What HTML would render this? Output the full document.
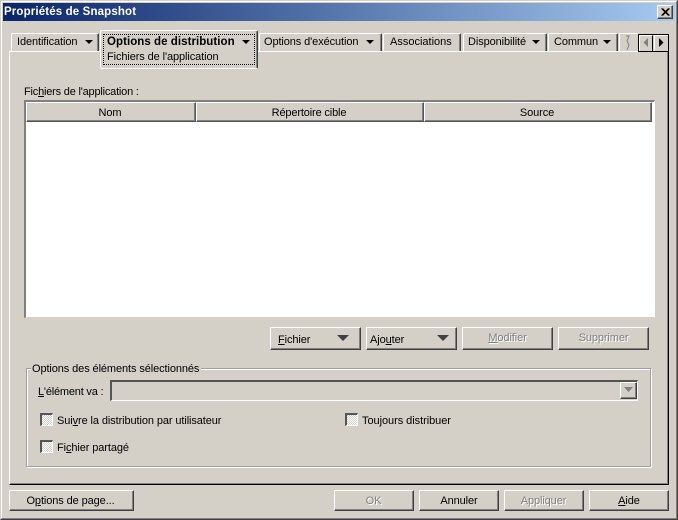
<!DOCTYPE html>
<html><head><meta charset="utf-8"><style>
html,body{margin:0;padding:0}
body{width:678px;height:520px;overflow:hidden;position:relative;font:11px/13px "Liberation Sans",sans-serif;letter-spacing:-.1px;color:#000;
background:#d4d0c8}
div,span.a{position:absolute;box-sizing:border-box}
.t{white-space:nowrap}
.btn{background:#d4d0c8;border-top:1px solid #fff;border-left:1px solid #fff;border-right:1px solid #404040;border-bottom:1px solid #404040;box-shadow:inset -1px -1px 0 #808080;text-align:center;white-space:nowrap}
.dis{color:#808080;text-shadow:1px 1px 0 #fff}
.tab{background:#d4d0c8;border-top:1px solid #fff;border-left:1px solid #fff;border-right:1px solid #404040;box-shadow:inset -1px 0 0 #808080;height:18px;border-radius:2px 2px 0 0;white-space:nowrap}
.arr{width:0;height:0;border-left:4px solid transparent;border-right:4px solid transparent;border-top:4px solid #000}
.arrb{width:0;height:0;border-left:6px solid transparent;border-right:6px solid transparent;border-top:6px solid #404040}
.cb{width:13px;height:13px;border-top:2px solid #555;border-left:2px solid #555;border-right:1px solid #fff;border-bottom:1px solid #fff;background:repeating-conic-gradient(#fff 0 25%,#d4d0c8 0 50%) 0 0/2px 2px}
.hd{top:102px;height:20px;background:#d4d0c8;border-top:1px solid #fff;border-left:1px solid #fff;border-right:1px solid #555;border-bottom:1px solid #555;box-shadow:inset -1px -1px 0 #808080;text-align:center;line-height:20px;padding-right:2px}
</style></head><body>
<!-- window frame -->
<div style="left:0;top:0;width:678px;height:520px;border-top:1px solid #d4d0c8;border-left:1px solid #d4d0c8;border-right:1px solid #404040;border-bottom:1px solid #404040"></div>
<div style="left:1px;top:1px;width:676px;height:518px;border-top:1px solid #fff;border-left:1px solid #fff;border-right:1px solid #808080;border-bottom:1px solid #808080"></div>
<!-- title -->
<div style="left:3px;top:3px;width:672px;height:18px;background:linear-gradient(90deg,#0a246a,#a6caf0)"></div>
<div class="t" style="left:4px;top:6px;color:#fff;font-weight:bold;font-size:11.5px;letter-spacing:.14px">Propriétés de Snapshot</div>
<div style="left:657px;top:5px;width:16px;height:14px;background:#d4d0c8;border-top:1px solid #fff;border-left:1px solid #fff;border-right:1px solid #404040;border-bottom:1px solid #404040;box-shadow:inset -1px -1px 0 #808080">
<svg width="14" height="12" style="position:absolute;left:0;top:0"><path d="M3.5 2.5L10.5 9.5M4.5 2.5L11.5 9.5M10.5 2.5L3.5 9.5M11.5 2.5L4.5 9.5" stroke="#000" stroke-width="1" fill="none"/></svg></div>
<!-- tab page -->
<div style="left:9px;top:51px;width:660px;height:434px;border-top:1px solid #fff;border-left:1px solid #fff;border-right:1px solid #000;border-bottom:1px solid #000;box-shadow:inset -1px -1px 0 #808080;box-sizing:border-box"></div>
<!-- tabs -->
<div class="tab" style="left:11px;top:33px;width:88px;"></div>
<div class="t" style="left:17px;top:36px">Identification</div><div class="arr" style="left:85px;top:40px"></div>
<div class="tab" style="left:259px;top:33px;width:123px"></div>
<div class="t" style="left:264px;top:36px">Options d'exécution</div><div class="arr" style="left:366px;top:40px"></div>
<div class="tab" style="left:383px;top:33px;width:78px"></div>
<div class="t" style="left:390px;top:36px;letter-spacing:0">Associations</div>
<div class="tab" style="left:463px;top:33px;width:84px"></div>
<div class="t" style="left:468px;top:36px">Disponibilité</div><div class="arr" style="left:532px;top:40px"></div>
<div class="tab" style="left:548px;top:33px;width:70px"></div>
<div class="t" style="left:554px;top:36px">Commun</div><div class="arr" style="left:603px;top:40px"></div>
<div style="left:619px;top:33px;width:19px;height:18px;border-top:1px solid #fff;border-left:1px solid #fff;overflow:hidden;background:#d4d0c8"></div>
<svg style="position:absolute;left:625px;top:35px" width="8" height="16"><path d="M1 1H4L2 6L4 10L2 15" stroke="#808080" fill="none"/></svg>
<!-- active tab -->
<div style="left:100px;top:30px;width:158px;height:39px;background:#d4d0c8;border-top:1px solid #fff;border-left:1px solid #fff;border-right:1px solid #404040;box-shadow:inset -1px 0 0 #808080;border-bottom:1px solid #fff;border-radius:2px"></div>
<div style="left:103px;top:34px;width:152px;height:31px;border:1px dotted #000"></div>
<div class="t" style="left:107px;top:36px;font-weight:bold;font-size:11.5px;letter-spacing:.05px">Options de distribution</div><div class="arr" style="left:242px;top:40px"></div>
<div class="t" style="left:107px;top:51px">Fichiers de l'application</div>
<!-- scroll -->
<div style="left:638px;top:34px;width:31px;height:18px;border:1px solid #000;background:#d4d0c8"></div>
<div style="left:639px;top:35px;width:14px;height:16px;border-top:1px solid #fff;border-left:1px solid #fff;border-right:1px solid #000"></div>
<div style="left:654px;top:35px;width:14px;height:16px;border-top:1px solid #fff;border-left:1px solid #fff"></div>
<svg style="position:absolute;left:642px;top:38px" width="24" height="10"><path d="M6 0V9L1.5 4.5Z" fill="#808080"/><path d="M17 0V9L21.5 4.5Z" fill="#000"/></svg>
<!-- list -->
<div class="t" style="left:24px;top:86px;letter-spacing:-.2px">Fic<u>h</u>iers de l'application :</div>
<div style="left:24px;top:100px;width:631px;height:218px;background:#fff;border-top:2px solid #808080;border-left:2px solid #808080;border-right:1px solid #fff;border-bottom:1px solid #d4d0c8"></div>
<div class="hd" style="left:26px;width:170px">Nom</div>
<div class="hd" style="left:196px;width:228px;letter-spacing:-.15px">Répertoire cible</div>
<div class="hd" style="left:424px;width:228px">Source</div>
<!-- buttons -->
<div class="btn" style="left:270px;top:327px;width:91px;height:23px"></div>
<div class="t" style="left:278px;top:334px"><u>F</u>ichier</div><div class="arrb" style="left:337px;top:335px"></div>
<div class="btn" style="left:366px;top:327px;width:91px;height:23px"></div>
<div class="t" style="left:370px;top:334px">Ajo<u>u</u>ter</div><div class="arrb" style="left:437px;top:335px"></div>
<div class="btn dis" style="left:462px;top:327px;width:91px;height:23px;line-height:21px"><u>M</u>odifier</div>
<div class="btn dis" style="left:558px;top:327px;width:91px;height:23px;line-height:21px">Supprimer</div>
<!-- group -->
<div style="left:26px;top:368px;width:625px;height:99px;border:1px solid #a0a0a0;box-shadow:1px 1px 0 #fff,inset 1px 1px 0 #fff"></div>
<div class="t" style="left:31px;top:363px;background:#d4d0c8;padding:0 2px 0 1px">Options des éléments sélectionnés</div>
<div class="t" style="left:38px;top:386px;letter-spacing:-.2px"><u>L</u>'élément va :</div>
<div style="left:110px;top:380px;width:528px;height:21px;border-top:2px solid #555;border-left:2px solid #555;border-right:1px solid #fff;border-bottom:1px solid #fff"></div>
<div style="left:620px;top:382px;width:17px;height:17px;border-top:1px solid #fff;border-left:1px solid #fff;border-right:1px solid #404040;border-bottom:1px solid #404040;box-shadow:inset -1px -1px 0 #808080"></div>
<svg style="position:absolute;left:624px;top:387px" width="10" height="7"><path d="M0 0H9L4.5 5Z" fill="#808080"/></svg>
<div class="cb" style="left:40px;top:413px"></div>
<div class="t" style="left:57px;top:415px">Sui<u>v</u>re la distribution par utilisateur</div>
<div class="cb" style="left:345px;top:413px"></div>
<div class="t" style="left:362px;top:415px;letter-spacing:-.05px">Toujours distribuer</div>
<div class="cb" style="left:40px;top:440px"></div>
<div class="t" style="left:57px;top:442px">Fi<u>c</u>hier partagé</div>
<!-- bottom -->
<div class="btn" style="left:9px;top:490px;width:125px;height:21px;line-height:21px;padding-right:2px">O<u>p</u>tions de page...</div>
<div class="btn dis" style="left:334px;top:490px;width:80px;height:21px;line-height:20px;padding-right:1px">OK</div>
<div class="btn" style="left:419px;top:490px;width:80px;height:21px;line-height:21px">Annuler</div>
<div class="btn dis" style="left:504px;top:490px;width:80px;height:21px;line-height:20px;padding-right:1px">Appliquer</div>
<div class="btn" style="left:589px;top:490px;width:80px;height:21px;line-height:21px"><u>A</u>ide</div>
</body></html>
